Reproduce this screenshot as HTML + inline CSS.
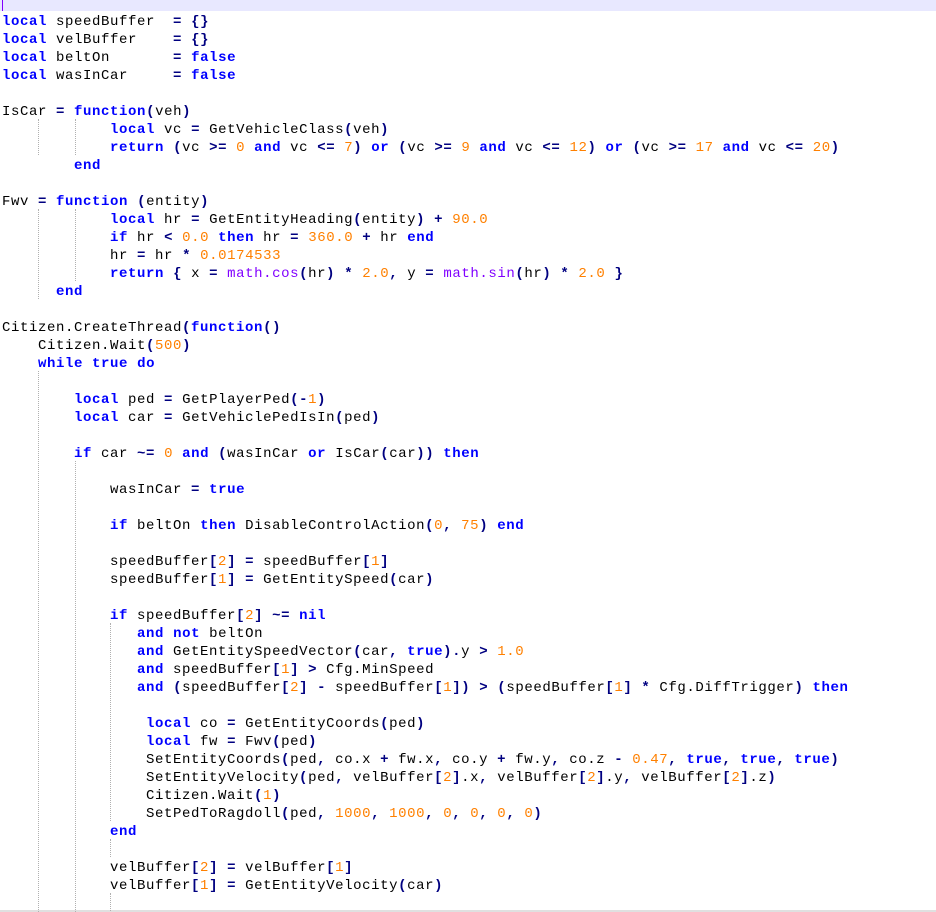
<!DOCTYPE html>
<html><head><meta charset="utf-8"><style>
html,body{margin:0;padding:0;background:#fff;width:936px;height:912px;overflow:hidden;position:relative}
#hl{position:absolute;left:0;top:0;width:936px;height:11px;background:#e8e8ff}
#caret{position:absolute;left:2px;top:0;width:1px;height:11px;background:#8000ff}
#bot{position:absolute;left:0;top:910px;width:936px;height:2px;background:#e0e0e0}
pre{position:absolute;left:2px;top:13px;margin:0;font:14px/18px "Liberation Mono",monospace;letter-spacing:0.6px;color:#000}
.k{color:#0000ff;font-weight:bold}
.o{color:#000080;font-weight:bold}
.n{color:#ff8000}
.m{color:#8000ff}
.g{position:absolute;width:0;border-left:1px dotted #b0b0b0}
</style></head><body>
<div id="hl"></div><div id="caret"></div><div id="bot"></div>
<div class="g" style="left:38px;top:119px;height:36px"></div>
<div class="g" style="left:75px;top:119px;height:36px"></div>
<div class="g" style="left:38px;top:209px;height:90px"></div>
<div class="g" style="left:75px;top:209px;height:72px"></div>
<div class="g" style="left:38px;top:371px;height:541px"></div>
<div class="g" style="left:75px;top:461px;height:451px"></div>
<div class="g" style="left:110px;top:623px;height:198px"></div>
<div class="g" style="left:110px;top:839px;height:18px"></div>
<div class="g" style="left:110px;top:893px;height:18px"></div>
<pre><span class="k">local</span> speedBuffer  <span class="o">=</span> <span class="o">{}</span>
<span class="k">local</span> velBuffer    <span class="o">=</span> <span class="o">{}</span>
<span class="k">local</span> beltOn       <span class="o">=</span> <span class="k">false</span>
<span class="k">local</span> wasInCar     <span class="o">=</span> <span class="k">false</span>

IsCar <span class="o">=</span> <span class="k">function</span><span class="o">(</span>veh<span class="o">)</span>
            <span class="k">local</span> vc <span class="o">=</span> GetVehicleClass<span class="o">(</span>veh<span class="o">)</span>
            <span class="k">return</span> <span class="o">(</span>vc <span class="o">&gt;=</span> <span class="n">0</span> <span class="k">and</span> vc <span class="o">&lt;=</span> <span class="n">7</span><span class="o">)</span> <span class="k">or</span> <span class="o">(</span>vc <span class="o">&gt;=</span> <span class="n">9</span> <span class="k">and</span> vc <span class="o">&lt;=</span> <span class="n">12</span><span class="o">)</span> <span class="k">or</span> <span class="o">(</span>vc <span class="o">&gt;=</span> <span class="n">17</span> <span class="k">and</span> vc <span class="o">&lt;=</span> <span class="n">20</span><span class="o">)</span>
        <span class="k">end</span>

Fwv <span class="o">=</span> <span class="k">function</span> <span class="o">(</span>entity<span class="o">)</span>
            <span class="k">local</span> hr <span class="o">=</span> GetEntityHeading<span class="o">(</span>entity<span class="o">)</span> <span class="o">+</span> <span class="n">90.0</span>
            <span class="k">if</span> hr <span class="o">&lt;</span> <span class="n">0.0</span> <span class="k">then</span> hr <span class="o">=</span> <span class="n">360.0</span> <span class="o">+</span> hr <span class="k">end</span>
            hr <span class="o">=</span> hr <span class="o">*</span> <span class="n">0.0174533</span>
            <span class="k">return</span> <span class="o">{</span> x <span class="o">=</span> <span class="m">math.cos</span><span class="o">(</span>hr<span class="o">)</span> <span class="o">*</span> <span class="n">2.0</span><span class="o">,</span> y <span class="o">=</span> <span class="m">math.sin</span><span class="o">(</span>hr<span class="o">)</span> <span class="o">*</span> <span class="n">2.0</span> <span class="o">}</span>
      <span class="k">end</span>

Citizen.CreateThread<span class="o">(</span><span class="k">function</span><span class="o">()</span>
    Citizen.Wait<span class="o">(</span><span class="n">500</span><span class="o">)</span>
    <span class="k">while</span> <span class="k">true</span> <span class="k">do</span>

        <span class="k">local</span> ped <span class="o">=</span> GetPlayerPed<span class="o">(-</span><span class="n">1</span><span class="o">)</span>
        <span class="k">local</span> car <span class="o">=</span> GetVehiclePedIsIn<span class="o">(</span>ped<span class="o">)</span>

        <span class="k">if</span> car <span class="o">~=</span> <span class="n">0</span> <span class="k">and</span> <span class="o">(</span>wasInCar <span class="k">or</span> IsCar<span class="o">(</span>car<span class="o">))</span> <span class="k">then</span>

            wasInCar <span class="o">=</span> <span class="k">true</span>

            <span class="k">if</span> beltOn <span class="k">then</span> DisableControlAction<span class="o">(</span><span class="n">0</span><span class="o">,</span> <span class="n">75</span><span class="o">)</span> <span class="k">end</span>

            speedBuffer<span class="o">[</span><span class="n">2</span><span class="o">]</span> <span class="o">=</span> speedBuffer<span class="o">[</span><span class="n">1</span><span class="o">]</span>
            speedBuffer<span class="o">[</span><span class="n">1</span><span class="o">]</span> <span class="o">=</span> GetEntitySpeed<span class="o">(</span>car<span class="o">)</span>

            <span class="k">if</span> speedBuffer<span class="o">[</span><span class="n">2</span><span class="o">]</span> <span class="o">~=</span> <span class="k">nil</span>
               <span class="k">and</span> <span class="k">not</span> beltOn
               <span class="k">and</span> GetEntitySpeedVector<span class="o">(</span>car<span class="o">,</span> <span class="k">true</span><span class="o">).</span>y <span class="o">&gt;</span> <span class="n">1.0</span>
               <span class="k">and</span> speedBuffer<span class="o">[</span><span class="n">1</span><span class="o">]</span> <span class="o">&gt;</span> Cfg.MinSpeed
               <span class="k">and</span> <span class="o">(</span>speedBuffer<span class="o">[</span><span class="n">2</span><span class="o">]</span> <span class="o">-</span> speedBuffer<span class="o">[</span><span class="n">1</span><span class="o">])</span> <span class="o">&gt;</span> <span class="o">(</span>speedBuffer<span class="o">[</span><span class="n">1</span><span class="o">]</span> <span class="o">*</span> Cfg.DiffTrigger<span class="o">)</span> <span class="k">then</span>

                <span class="k">local</span> co <span class="o">=</span> GetEntityCoords<span class="o">(</span>ped<span class="o">)</span>
                <span class="k">local</span> fw <span class="o">=</span> Fwv<span class="o">(</span>ped<span class="o">)</span>
                SetEntityCoords<span class="o">(</span>ped<span class="o">,</span> co.x <span class="o">+</span> fw.x<span class="o">,</span> co.y <span class="o">+</span> fw.y<span class="o">,</span> co.z <span class="o">-</span> <span class="n">0.47</span><span class="o">,</span> <span class="k">true</span><span class="o">,</span> <span class="k">true</span><span class="o">,</span> <span class="k">true</span><span class="o">)</span>
                SetEntityVelocity<span class="o">(</span>ped<span class="o">,</span> velBuffer<span class="o">[</span><span class="n">2</span><span class="o">]</span>.x<span class="o">,</span> velBuffer<span class="o">[</span><span class="n">2</span><span class="o">]</span>.y<span class="o">,</span> velBuffer<span class="o">[</span><span class="n">2</span><span class="o">]</span>.z<span class="o">)</span>
                Citizen.Wait<span class="o">(</span><span class="n">1</span><span class="o">)</span>
                SetPedToRagdoll<span class="o">(</span>ped<span class="o">,</span> <span class="n">1000</span><span class="o">,</span> <span class="n">1000</span><span class="o">,</span> <span class="n">0</span><span class="o">,</span> <span class="n">0</span><span class="o">,</span> <span class="n">0</span><span class="o">,</span> <span class="n">0</span><span class="o">)</span>
            <span class="k">end</span>

            velBuffer<span class="o">[</span><span class="n">2</span><span class="o">]</span> <span class="o">=</span> velBuffer<span class="o">[</span><span class="n">1</span><span class="o">]</span>
            velBuffer<span class="o">[</span><span class="n">1</span><span class="o">]</span> <span class="o">=</span> GetEntityVelocity<span class="o">(</span>car<span class="o">)</span>
</pre>
</body></html>
